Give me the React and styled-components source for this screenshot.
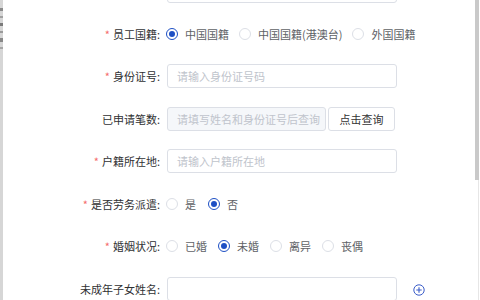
import React from "react";
import styled, { createGlobalStyle } from "styled-components";

const Global = createGlobalStyle`
  html, body { margin: 0; padding: 0; background: #fff; }
  body { font-family: "Noto Sans CJK SC", "Noto Sans", sans-serif; }
  * { box-sizing: border-box; }
`;

const Frame = styled.div`
  width: 480px;
  height: 300px;
  display: flex;
  overflow: hidden;
  background: #fff;
`;

const LeftEdge = styled.div`
  width: 3px;
  flex: none;
  background: #d6d6d6;
  display: flex;
  flex-direction: column;
  gap: 5px;
  padding-top: 8px;
`;

const Mark = styled.div`
  height: ${(p) => p.h}px;
  background: ${(p) => p.c};
`;

const Main = styled.div`
  flex: 1;
  overflow: hidden;
`;

const Form = styled.div`
  margin-top: -21px;
  display: flex;
  flex-direction: column;
  gap: 18.5px;
`;

const Row = styled.div`
  display: flex;
  align-items: center;
  height: 24px;
`;

const Label = styled.div`
  width: 158px;
  flex: none;
  text-align: right;
  font-size: 11px;
  color: #303133;
  padding-right: 1px;
  white-space: nowrap;
`;

const Star = styled.span`
  color: #f56c6c;
  margin-right: 3px;
`;

const Control = styled.div`
  margin-left: 6px;
  display: flex;
  align-items: center;
`;

const Input = styled.div`
  width: ${(p) => p.w || 230}px;
  height: 24px;
  border: 1px solid #dcdfe6;
  border-radius: 3px;
  background: ${(p) => (p.disabled ? "#f5f7fa" : "#fff")};
  font-size: 11px;
  color: #c0c4cc;
  padding-left: 9px;
  display: flex;
  align-items: center;
  white-space: nowrap;
`;

const Button = styled.div`
  margin-left: 2px;
  width: 67px;
  height: 24px;
  border: 1px solid #dcdfe6;
  border-radius: 3px;
  background: #fff;
  font-size: 11px;
  color: #333;
  display: flex;
  align-items: center;
  justify-content: center;
`;

const RadioGroup = styled.div`
  display: flex;
  align-items: center;
  margin-left: -1px;
`;

const RadioItem = styled.div`
  display: flex;
  align-items: center;
  margin-right: ${(p) => p.gap}px;
  font-size: 11px;
  color: #606266;
  white-space: nowrap;
`;

const Circle = styled.span`
  width: 12px;
  height: 12px;
  border-radius: 50%;
  border: 1px solid ${(p) => (p.checked ? "#1d4fc4" : "#dcdfe6")};
  background: #fff;
  display: inline-flex;
  align-items: center;
  justify-content: center;
  margin-right: 7px;
  flex: none;
  &::after {
    content: "";
    width: 6px;
    height: 6px;
    border-radius: 50%;
    background: ${(p) => (p.checked ? "#1d4fc4" : "transparent")};
  }
`;

const AddIcon = styled.svg`
  margin-left: 16px;
  margin-top: 2px;
`;

const Scrollbar = styled.div`
  width: 5px;
  flex: none;
  display: flex;
  flex-direction: column;
  background: #fff;
`;

const Thumb = styled.div`
  height: 180px;
  width: 4px;
  background: #c9c9c9;
`;

const Track = styled.div`
  flex: 1;
  margin-left: 3px;
  width: 1px;
  background: #e6e6e6;
`;

function Radios({ items, checked, gap = 12 }) {
  return (
    <RadioGroup>
      {items.map((t) => (
        <RadioItem key={t} gap={gap}>
          <Circle checked={t === checked} />
          {t}
        </RadioItem>
      ))}
    </RadioGroup>
  );
}

function Field({ label, required, children }) {
  return (
    <Row>
      <Label>
        {label && (
          <>
            {required && <Star>*</Star>}
            {label}:
          </>
        )}
      </Label>
      <Control>{children}</Control>
    </Row>
  );
}

export default function App() {
  return (
    <Frame>
      <Global />
      <LeftEdge>
        <Mark h={3} c="#8a8a8a" />
        <Mark h={2} c="#a0a0a0" />
        <Mark h={3} c="#7a7a7a" />
        <Mark h={2} c="#9a9a9a" />
        <Mark h={4} c="#888" />
        <Mark h={2} c="#a5a5a5" />
      </LeftEdge>
      <Main>
        <Form>
          <Field>
            <Input />
          </Field>
          <Field label="员工国籍" required>
            <Radios
              items={["中国国籍", "中国国籍(港澳台)", "外国国籍"]}
              checked="中国国籍"
              gap={10}
            />
          </Field>
          <Field label="身份证号" required>
            <Input>请输入身份证号码</Input>
          </Field>
          <Field label="已申请笔数">
            <Input w={159} disabled>
              请填写姓名和身份证号后查询
            </Input>
            <Button>点击查询</Button>
          </Field>
          <Field label="户籍所在地" required>
            <Input>请输入户籍所在地</Input>
          </Field>
          <Field label="是否劳务派遣" required>
            <Radios items={["是", "否"]} checked="否" gap={12} />
          </Field>
          <Field label="婚姻状况" required>
            <Radios items={["已婚", "未婚", "离异", "丧偶"]} checked="未婚" gap={11} />
          </Field>
          <Field label="未成年子女姓名">
            <Input />
            <AddIcon width="12" height="12" viewBox="0 0 12 12">
              <circle cx="6" cy="6" r="5.2" fill="none" stroke="#3a5cc8" strokeWidth="1" />
              <path d="M6 3.3v5.4M3.3 6h5.4" stroke="#3a5cc8" strokeWidth="1.1" />
            </AddIcon>
          </Field>
        </Form>
      </Main>
      <Scrollbar>
        <Thumb />
        <Track />
      </Scrollbar>
    </Frame>
  );
}
